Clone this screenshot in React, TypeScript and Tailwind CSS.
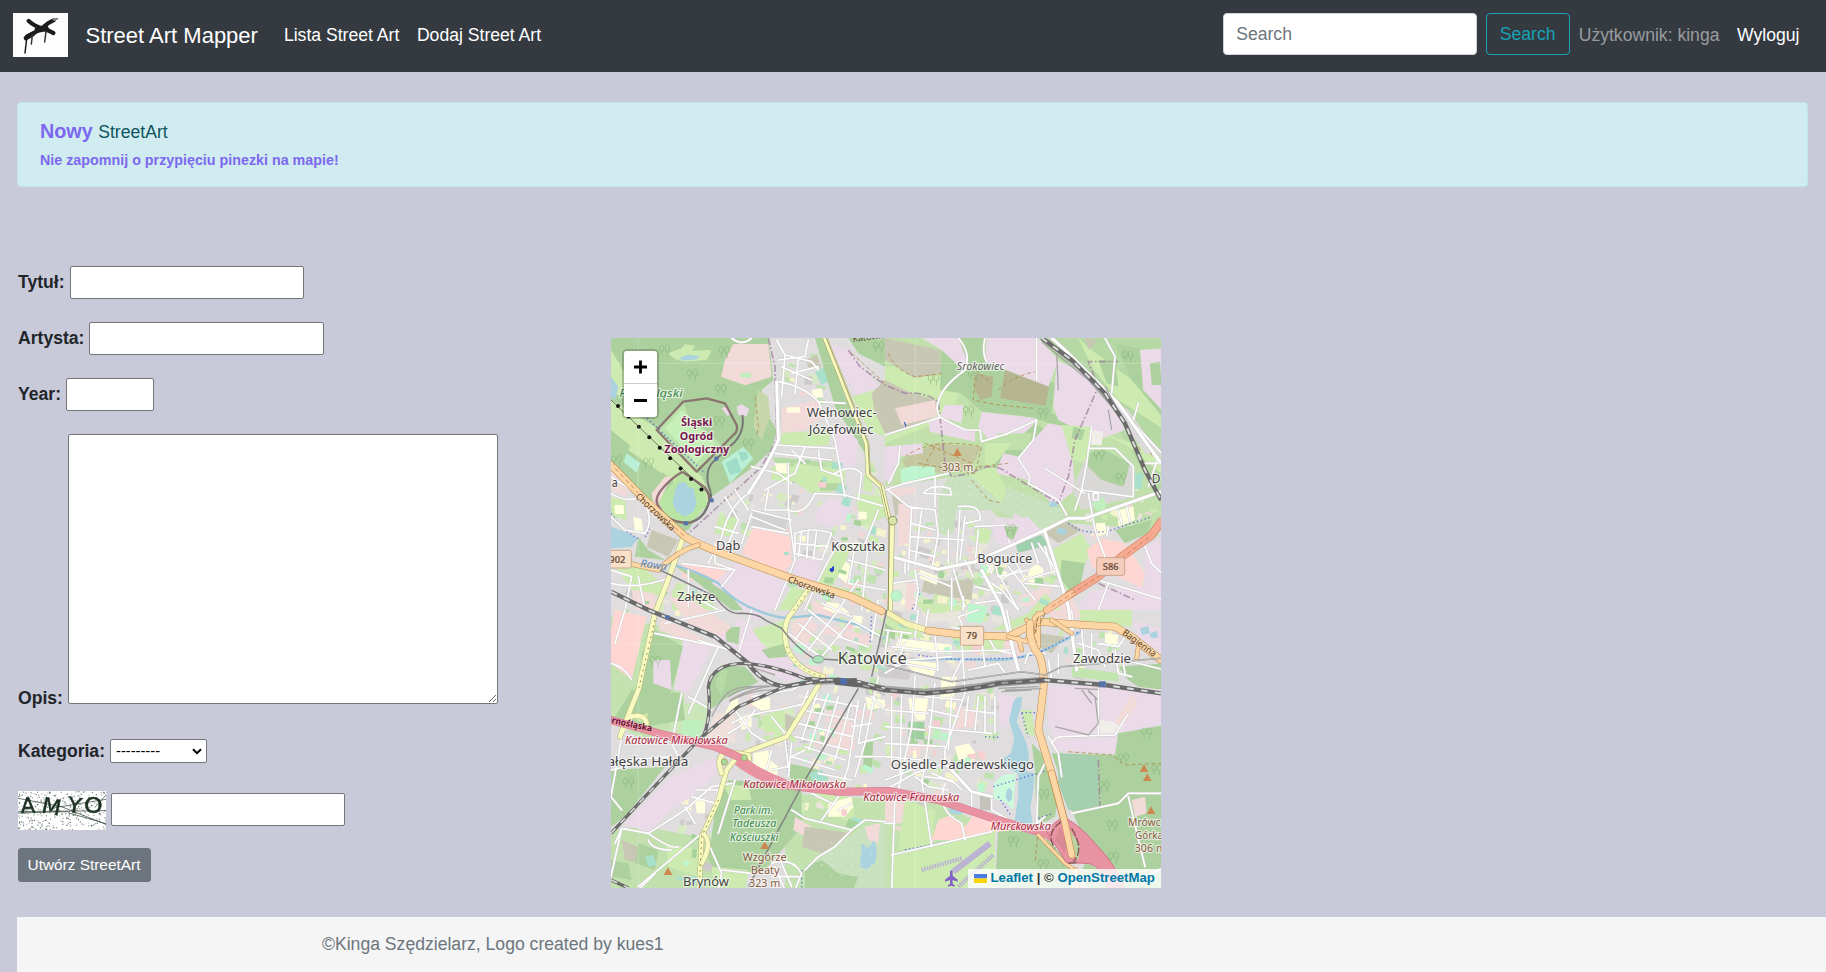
import React from "react";

type Area = [string, string];
type Label = { t: string; x: number; y: number; w: number; s: number; c: string; b?: boolean; i?: boolean; r?: number };

const FOREST = "#add19e";
const GRASS = "#cdebb0";
const PARK = "#c0efbf";
const IND = "#ebdbe8";
const RETAIL = "#ffd6d1";
const COMM = "#f2dad9";
const WATER = "#aad3df";
const BROWN = "#b6b592";
const DUMP = "#c7c7b4";
const SCHOOL = "#ffffe0";
const PITCH = "#a9e0cb";
const SCRUB = "#c8d7ab";

/* Large green backdrops, laid under everything else. */
const backdrop: Area[] = [
  ["#c2e0ac", "840,24 1668,24 1668,600 1400,580 1180,560 1050,440 840,470"],
  ["#b5d8a4", "1300,24 1668,24 1668,520 1560,330 1480,200"],
  ["#c3e2b0", "18,860 230,900 240,1180 120,1230 18,1180"],
  ["#c3e2b0", "540,1390 1000,1420 1130,1480 1180,1674 540,1674"],
  ["#c2dfae", "18,1500 120,1490 330,1530 330,1674 18,1674"],
  ["#cbe6b9", "200,1120 320,1120 280,1240 190,1230"],
  ["#b9dba8", "500,380 700,400 690,440 540,440"],
];

/* Each quadrant of the map is drawn in its own 840-unit square. */
const areasTL: Area[] = [
  [FOREST, "18,24 490,24 505,150 470,180 480,240 515,300 500,360 440,415 320,500 250,600 215,610 18,400"],
  [GRASS, "18,60 60,130 120,170 60,200 18,190"],
  [WATER, "18,140 40,170 30,210 18,200"],
  [GRASS, "190,70 230,55 240,42 270,48 262,62 320,60 305,90 240,95 210,88"],
  [WATER, "222,85 248,74 285,78 275,88 235,92"],
  [GRASS, "18,210 150,290 290,440 320,500 300,540 190,440 18,300"],
  [GRASS, "90,320 160,330 210,400 170,430 70,360"],
  [COMM, "385,42 490,42 500,140 420,166 348,140 360,90"],
  [PARK, "405,130 437,128 438,143 408,143"],
  ["#bce3ab", "155,300 235,215 305,205 360,220 395,290 390,310 275,425"],
  [FOREST, "235,215 305,205 360,220 395,290 390,310 350,345 300,300 250,260"],
  ["#c6f0b8", "180,295 230,240 330,340 275,400"],
  ["#b9f0d5", "350,395 415,350 445,385 375,460"],
  ["#9fdcc8", "362,400 395,382 410,425 375,435"],
  ["#9fdcc8", "400,365 425,365 430,385 410,395"],
  ["#b9f0d5", "65,370 105,400 95,428 55,395"],
  [SCRUB, "460,180 490,200 495,260 470,330 445,290"],
  ["#b9e4a4", "165,500 230,430 300,480 305,530 260,575 195,575 155,530"],
  [WATER, "210,480 222,458 242,456 248,470 265,475 275,520 265,545 240,560 215,545 203,520"],
  [COMM, "140,490 180,440 200,440 160,520 175,545 150,550"],
  [IND, "395,230 410,222 432,238 425,258 400,255"],
  [IND, "350,235 362,230 380,250 368,258"],
  [COMM, "18,420 80,480 60,500 18,480"],
  [SCHOOL, "85,560 110,568 115,610 90,610"],
  [GRASS, "18,500 60,510 65,570 18,560"],
  [SCHOOL, "28,525 55,525 58,552 30,552"],
  [WATER, "18,590 60,605 100,625 80,650 18,655"],
  [DUMP, "140,600 220,630 190,680 125,650"],
  [FOREST, "100,620 130,660 180,690 90,680"],
  [GRASS, "500,410 580,410 560,460 500,450"],
  [COMM, "530,235 640,210 650,260 600,300 530,310"],
  [SCHOOL, "545,232 585,232 585,248 545,248"],
  [GRASS, "520,310 680,300 670,345 530,350"],
  [PITCH, "630,125 665,108 690,145 650,165"],
  [DUMP, "600,90 635,75 650,110 615,120"],
  [SCHOOL, "620,180 650,175 655,200 625,205"],
  [FOREST, "630,24 660,24 720,200 790,340 780,370 690,230"],
  [IND, "670,40 730,60 840,190 780,240 720,140"],
  [GRASS, "740,200 840,170 840,320 790,300"],
  [DUMP, "800,190 840,150 840,310 810,250"],
  [IND, "690,290 760,330 750,410 710,420 690,350"],
  [FOREST, "730,24 840,24 840,110 760,70"],
  [GRASS, "570,400 720,420 720,480 620,490 560,450"],
  ["#b5d6a2", "645,460 712,460 712,482 645,482"],
  [IND, "640,530 680,500 735,520 730,570 680,595 630,570"],
  [GRASS, "340,560 400,560 380,620 330,610"],
  ["#d3d2d2", "445,540 550,560 540,605 440,590"],
  [RETAIL, "445,590 555,620 560,700 530,735 410,670"],
  [RETAIL, "230,700 375,710 320,770 230,740"],
  [IND, "395,690 550,760 510,840 400,840 345,760"],
  [FOREST, "200,700 240,720 330,750 420,840 380,840 280,760"],
  [DUMP, "450,775 510,785 505,812 448,800"],
  [SCHOOL, "705,680 740,710 725,760 700,740"],
  [IND, "560,690 650,680 630,760 570,750"],
  [GRASS, "690,660 740,640 720,700 680,770 640,760"],
  [GRASS, "560,770 600,780 560,840 520,840"],
  [GRASS, "750,490 840,500 840,560 770,590"],
  [SCHOOL, "510,400 545,400 545,430 515,430"],
  [SCHOOL, "760,545 785,545 785,568 760,568"],
  [GRASS, "18,690 100,700 170,760 170,800 80,780"],
  [COMM, "80,780 150,790 150,840 90,840"],
  [GRASS, "200,780 300,790 340,840 200,840"],
];

const areasTR: Area[] = [
  [GRASS, "0,110 240,120 200,260 0,340"],
  [DUMP, "0,24 165,60 170,130 90,145 0,90"],
  [DUMP, "0,150 80,190 155,210 150,260 60,300 0,310"],
  [FOREST, "170,24 300,24 300,90 510,160 500,250 620,290 560,300 430,260 290,245 230,190 165,180"],
  [IND, "110,24 220,24 245,90 235,120 170,60"],
  [IND, "305,24 460,24 520,90 490,170 300,95"],
  [BROWN, "272,130 325,140 320,200 285,210 268,175"],
  [BROWN, "360,120 492,170 482,228 345,205"],
  [COMM, "30,235 150,210 155,260 50,285"],
  [IND, "180,225 235,225 230,280 165,260"],
  [IND, "130,270 165,265 270,305 270,335 135,305"],
  [IND, "290,245 455,265 430,310 310,330 280,290"],
  [FOREST, "450,280 480,300 440,390 400,390 330,430 310,410"],
  ["#c4c79f", "50,390 150,340 290,350 260,410 170,430 60,410"],
  ["#bfe0ab", "340,310 440,310 430,360 310,360"],
  [IND, "515,90 600,130 700,260 720,300 640,330 520,270 505,230"],
  [IND, "490,280 545,290 560,350 570,480 510,530 430,450 330,430 355,370 400,380"],
  [GRASS, "530,285 620,290 600,400 560,390"],
  [FOREST, "565,290 600,300 590,330 560,325"],
  [GRASS, "250,430 330,410 370,490 340,540 270,480"],
  [GRASS, "300,340 380,340 340,390 300,430"],
  ["#c9e1bf", "190,440 260,440 350,520 365,470 520,530 545,560 480,600 420,590 340,540 215,540 205,610 160,610 160,500"],
  ["#bdf5cf", "45,420 80,408 150,410 150,445 50,460"],
  [COMM, "0,480 90,470 90,490 40,500"],
  [DUMP, "20,490 65,530 30,560"],
  [IND, "320,580 430,560 470,605 370,660 330,630"],
  [IND, "385,550 450,580 420,600 390,590"],
  [FOREST, "360,590 400,590 385,630 365,620"],
  [GRASS, "270,590 320,600 310,640 270,640"],
  ["#9fd0b0", "390,640 470,615 490,645 400,668"],
  ["#f0eee8", "620,300 655,305 650,345 615,345"],
  ["#d9d8d6", "600,390 740,400 750,500 590,540 560,480"],
  [GRASS, "650,310 840,370 840,440 730,350"],
  [FOREST, "605,370 660,360 735,400 715,470 650,450 610,410"],
  [IND, "0,350 110,340 115,370 40,380 20,460 0,450"],
  [GRASS, "580,24 620,60 740,150 840,260 840,300 700,210 620,110"],
  ["#dcdada", "650,190 730,240 830,380 780,370 700,260"],
  [FOREST, "640,90 690,90 700,170 665,160"],
  [FOREST, "690,40 780,60 770,180 840,240 840,270 740,150"],
  [DUMP, "600,24 640,30 610,60"],
  [IND, "765,60 840,55 840,250 775,180"],
  [FOREST, "795,100 825,95 830,165 800,165"],
  [PARK, "620,520 655,500 665,530 640,545"],
  [WATER, "490,515 512,515 520,530 495,530"],
  [DUMP, "480,610 540,570 590,600 520,640"],
  [WATER, "520,592 545,598 540,615 515,610"],
  [GRASS, "500,660 590,610 620,660 580,740 550,790 520,740"],
  [FOREST, "530,690 600,700 585,770 560,790 525,745"],
  [RETAIL, "605,660 650,625 720,640 780,730 770,775 700,740 620,710"],
  [IND, "780,650 840,620 840,840 570,840 620,780 780,770"],
  [SCHOOL, "632,580 660,578 665,610 640,620"],
  [SCHOOL, "700,540 745,530 750,570 700,590"],
  [SCHOOL, "430,720 455,702 475,715 475,755 430,765"],
  [SCHOOL, "340,720 365,725 370,740 350,750"],
  [SCHOOL, "300,705 325,705 325,728 305,728"],
  [FOREST, "690,600 800,570 790,610 720,640"],
  [PITCH, "750,430 775,430 770,475 750,480"],
  [DUMP, "120,740 180,752 265,750 260,810 190,800 110,785"],
  [SCHOOL, "105,720 160,740 155,765 105,745"],
  [COMM, "40,520 90,530 70,640 40,650"],
  ["#ebe7df", "20,760 100,760 90,840 20,840"],
  [COMM, "65,760 98,760 85,840 60,840"],
  [COMM, "400,800 510,760 480,820 420,830"],
];

const areasBL: Area[] = [
  [RETAIL, "30,0 125,20 80,210 18,160 18,60"],
  [FOREST, "150,60 235,110 200,240 160,320 110,310 110,130"],
  [IND, "145,150 195,150 200,240 145,220"],
  [IND, "240,80 320,110 300,160 250,250 205,240"],
  [COMM, "170,20 300,90 290,110 160,60"],
  [IND, "300,70 440,50 600,190 560,220 420,160 380,130"],
  [FOREST, "360,50 410,55 400,100 365,95"],
  [GRASS, "440,60 540,30 540,110 470,120"],
  [FOREST, "315,300 310,200 350,165 420,170 460,215 370,260"],
  ["#b7dba6", "330,220 350,180 370,180 350,260"],
  [FOREST, "18,340 80,240 230,250 240,330 120,350"],
  [GRASS, "70,320 130,310 120,340"],
  ["#f0e0dc", "330,310 390,310 390,400 300,390"],
  [SCHOOL, "400,320 440,310 440,350 410,360"],
  [SCHOOL, "380,270 400,265 400,300 360,310"],
  [SCHOOL, "430,275 495,262 495,298 470,302"],
  [DUMP, "540,310 580,330 560,370 540,360"],
  [GRASS, "470,320 540,290 540,360 480,370"],
  ["#b9f0d5", "652,255 675,250 682,275 660,288"],
  [FOREST, "18,480 180,470 60,620 18,650"],
  [IND, "60,640 200,500 330,440 335,490 300,530 200,600 130,670"],
  [SCHOOL, "445,430 490,420 495,450 520,470 515,505 480,510 445,480"],
  [FOREST, "370,510 590,525 590,650 480,780 350,800 310,750 330,600"],
  [GRASS, "350,520 430,530 440,570 380,570"],
  [FOREST, "550,460 640,480 630,540 560,530"],
  [PITCH, "610,490 650,480 670,510 625,515"],
  [COMM, "570,620 620,650 600,680 565,660"],
  [DUMP, "600,650 740,670 650,730 590,710"],
  [GRASS, "620,540 700,530 750,590 740,640 670,610"],
  [SCHOOL, "670,580 740,560 745,590 720,620 670,620"],
  [COMM, "650,350 750,330 750,420 660,410"],
  [FOREST, "775,395 805,395 800,485 775,480"],
  [COMM, "665,300 720,300 710,340 660,335"],
  [SCHOOL, "780,260 840,270 840,290 790,300"],
  ["#c9e1bf", "640,740 760,660 840,640 840,850 600,850"],
  [FOREST, "600,770 650,750 700,790 760,800 740,850 600,850"],
  [COMM, "780,650 825,640 820,700 790,690"],
  [WATER, "770,700 788,715 808,690 816,720 810,760 785,778 765,770"],
  [DUMP, "50,690 120,720 110,760 60,750"],
  [FOREST, "100,700 160,720 150,780 90,760"],
  [PITCH, "120,740 145,735 155,765 130,770"],
  [WATER, "230,715 245,708 265,722 262,742 240,755 228,740"],
  [GRASS, "180,700 290,720 275,800 190,770"],
  [FOREST, "18,750 70,760 80,810 18,800"],
  [GRASS, "320,770 430,780 420,850 330,850"],
  [FOREST, "520,620 560,610 540,690 510,700"],
  [SCHOOL, "270,570 300,565 300,610 275,610"],
  [PARK, "235,330 300,330 280,390 230,370"],
];

const areasBR: Area[] = [
  [COMM, "490,0 570,0 560,40 500,30"],
  [DUMP, "460,70 540,80 500,130 460,110"],
  [COMM, "350,90 410,95 410,150 370,150"],
  [SCHOOL, "660,70 700,75 695,105 660,100"],
  [GRASS, "570,0 740,0 740,50 590,40"],
  [IND, "740,30 840,60 840,150 760,80"],
  [WATER, "765,55 790,48 795,70 770,75"],
  [WATER, "795,70 815,62 820,82 798,85"],
  [FOREST, "700,170 840,160 840,240 760,230 730,210"],
  ["#c2e4af", "560,170 700,190 700,215 560,200"],
  [IND, "490,225 640,230 640,380 510,390 490,340"],
  [IND, "640,230 840,240 840,340 720,370 640,380"],
  [IND, "510,390 700,380 690,430 505,420"],
  ["#f0eee8", "640,330 720,340 700,370 640,370"],
  [COMM, "740,250 760,280 710,350 690,340"],
  [FOREST, "500,430 690,435 700,370 840,345 840,840 690,840 620,740 560,600"],
  ["#a6cfb0", "520,430 640,440 640,600 550,600 520,520"],
  [IND, "340,250 395,260 365,350 345,350"],
  [GRASS, "410,300 440,300 450,380 420,370"],
  [WATER, "385,275 395,262 412,262 408,290 395,335 425,400 432,440 425,485 448,490 445,540 436,590 450,700 430,720 415,755 400,740 405,700 380,685 400,560 400,490 360,470 355,445 378,430 388,385 372,330"],
  ["#cdfadd", "325,520 355,495 392,490 385,600 360,575 325,565"],
  [WATER, "365,540 374,533 382,545 380,570 370,576 362,562"],
  [FOREST, "440,400 480,440 520,560 510,620 455,650 450,480"],
  [FOREST, "340,640 490,690 560,770 560,840 330,840"],
  ["#9fcf9f", "70,335 118,335 118,390 70,385"],
  [PARK, "145,345 170,350 165,390 140,385"],
  [SCHOOL, "170,200 215,200 205,270 165,270"],
  [SCHOOL, "70,265 130,265 120,330 100,330 75,300"],
  [COMM, "70,395 115,400 105,440 65,440"],
  [COMM, "210,290 280,300 270,350 210,360"],
  [SCHOOL, "210,410 250,400 280,440 250,460 220,450"],
  [COMM, "0,560 80,570 60,640 0,640"],
  [GRASS, "60,570 150,600 140,700 40,720"],
  [WATER, "190,590 240,600 225,615 195,610"],
  [RETAIL, "160,630 200,615 240,650 270,610 310,620 390,655 230,690 140,690"],
  [GRASS, "20,740 330,660 330,840 20,840"],
  ["#c4c2ba", "285,550 320,560 315,600 285,600"],
  [COMM, "740,570 780,560 785,610 750,620"],
];

/* City centre and the belt south of the trunk road, in whole-map units. */
const centre: Area[] = [
  [IND, "320,760 405,700 550,760 520,820 480,850 450,880 380,800"],
  [IND, "395,860 430,880 470,940 600,1040 540,1045 430,990 390,950"],
  [FOREST, "365,895 405,890 400,945 365,930"],
  [FOREST, "470,960 540,940 545,980 490,985"],
  [COMM, "190,800 260,810 380,890 350,920 250,880"],
  [COMM, "560,880 600,850 640,890 600,950 560,940"],
  [COMM, "620,810 700,840 660,870 620,840"],
  [SCHOOL, "665,815 700,820 735,850 690,850 655,835"],
  [SCHOOL, "745,855 775,860 765,895 740,885"],
  [GRASS, "640,760 740,780 800,810 790,825 650,770"],
  [COMM, "655,880 800,920 790,950 720,930 650,910"],
  [GRASS, "845,860 940,900 960,925 880,920 840,900"],
  [SCHOOL, "880,925 1040,945 1040,972 870,960"],
  [GRASS, "1040,920 1200,930 1190,970 1060,965"],
  [SCHOOL, "850,985 1000,1000 985,1040 930,1030 900,1000"],
  ["#e9e5dd", "940,820 1070,820 1065,880 960,870"],
  [GRASS, "930,815 1065,825 1070,840 1000,850 960,850"],
  ["#bdf5cf", "1090,820 1150,830 1130,880 1085,875"],
  [FOREST, "840,880 870,900 870,930 838,915"],
  ["#cfcccc", "820,1010 920,1020 910,1050 820,1040"],
  [COMM, "600,1000 650,1010 650,1030 610,1030"],
  [GRASS, "1160,900 1200,880 1270,850 1320,790 1340,810 1310,850 1220,900"],
  [COMM, "1360,830 1400,800 1430,860 1390,870"],
];

/* Minor streets, white with a faint casing. */
const streetsTL = [
  "M380 24Q410 50 440 24M515 30L540 75L620 95L640 120M520 90L600 80L610 30M530 110L620 150M540 75L530 200M580 85L570 190M560 130L640 110",
  "M520 155Q600 170 640 215L690 330L720 500M520 160L525 330Q480 430 430 490Q370 530 350 620L310 700M510 345L690 355M640 215L720 220",
  "M690 430Q740 400 770 430L760 510M550 540Q600 560 630 490L720 495L840 530M550 400L550 540L570 690L510 840M600 350L570 430L480 480",
  "M360 500L400 570M390 480L430 540M400 570L370 640M330 590L400 610M440 540L560 570M440 560L540 600M410 640L440 550M440 590L550 610",
  "M570 610Q620 590 680 610L650 690L570 670ZM590 605L580 680M610 600L605 685M635 600L625 690M570 640L670 650",
  "M600 840Q640 740 700 640L770 640M730 690L840 720M750 650L730 760L840 780M790 640L770 840M820 540L780 640L840 660",
  "M18 490Q60 520 110 500Q150 570 120 610L60 600L18 560M70 470L150 560M18 720L80 740L60 840M18 760Q100 780 200 740M100 740L120 840",
  "M230 700L380 720M330 640L330 700L390 720L350 770M250 720L250 830M250 790L340 840M18 440L110 500",
  "M440 410L520 430L560 460M490 480L480 540L550 540M510 370L680 390M560 360L600 400M640 360L650 420L710 440M690 240L660 260",
];
const streetsTR = [
  "M220 24Q260 70 240 120Q170 170 160 215Q150 240 165 262L0 315M300 24Q290 70 305 95M455 24L455 150M165 262L240 300L285 300L290 335L370 310L455 270L445 330L400 385L435 440L430 460L520 510L545 555",
  "M0 480L60 460L190 430M10 480L70 530L150 540L160 610L140 720M80 530L70 720M110 540L90 700M80 580L150 600M75 620L240 630M70 660L150 680",
  "M45 350L40 400L10 460M115 490Q140 460 195 475L200 495L120 490M150 440L150 530M220 530Q290 520 285 570L240 580M225 540L215 700M240 560L225 690M190 600L190 700M280 600L270 700M270 590L370 585",
  "M620 290L605 400L590 480L570 540M610 355L690 355L745 410L745 500M480 415L600 490M590 480L740 500M625 490L625 510L640 510L640 490ZM610 490L630 600L660 680M680 210L840 380M760 220L745 270M660 24L690 80L680 190",
  "M370 630L380 650M240 690L265 740M290 740L350 780L400 840M270 770L350 790M270 820L340 810M330 700L340 740L430 720M390 690L420 750L520 720M370 710L450 810M345 740L400 840M420 760L530 770M460 640L500 700L530 760",
  "M20 730L20 840M60 690L60 730M90 720L100 780L90 840M200 700L240 830M20 760L90 750M235 800L235 840M640 750L840 810M670 760L640 840M700 540L710 580M725 530L735 575M670 590L665 620",
  "M780 650L800 700L840 740M840 400L780 400M820 380L790 470M300 680L320 730M360 740L400 720M440 640L460 700M480 650L500 720M100 730L200 770M200 745L200 840",
];
const streetsBL = [
  "M60 0L30 100M18 160Q60 170 80 210M150 70L340 110L250 310M340 110L380 120M250 260L320 300M180 40L360 0M280 90L400 130L440 0",
  "M230 250L200 400L220 440M390 300L440 370L490 400M380 340Q430 310 520 300L600 280M370 370L420 340L450 300M500 320L540 370M440 260L560 240L600 220",
  "M600 260L760 290M590 300L750 330M580 340L740 380M570 380L730 420M600 410L720 450M560 440L690 480M640 240L590 390M670 250L610 420M700 260L650 430M560 400L550 500M540 390L550 470L500 480M500 420L480 500",
  "M760 270L730 470L700 560L650 630M560 600L600 625L740 660L780 630L840 635M740 660L690 710L640 740L600 780M560 440L600 420M700 600L740 580M640 490L740 510M620 550L680 580",
  "M50 600L18 560L50 380L80 330M30 700L50 655L130 670Q200 720 220 710M50 655L18 800M130 670L240 600L320 530L380 520M240 590L270 640M260 560L330 580M270 540L340 540L320 620M390 510L340 670M100 830L290 670M130 690Q140 720 200 720",
  "M550 70L660 150M580 40L680 120M610 0L710 80M650 -20L740 20M570 90L620 20M610 120L700 0L760 -90M650 140L740 30M700 80L790 110M740 30L830 80M820 -30L800 90",
  "M500 760Q560 740 590 790L570 840M510 770L540 840M530 760L560 830M500 800L580 800M310 700L350 790L340 840M150 790L100 840M350 780L440 790",
  "M820 200L780 400L750 500M800 340L740 350M840 380L760 400M840 440L750 440M800 260L840 300M60 450L200 440M18 480L60 470M610 240L560 370M740 270L690 450M780 280L760 400",
];
const streetsBR = [
  "M200 50Q250 70 220 20L280 0M365 0L400 180M230 80L240 250L180 420L180 460M90 200L80 350L40 540M150 220L130 400L110 520M0 300L130 310M0 350L120 360M0 400L180 410M20 260L20 480M50 250L45 490M0 440L110 450",
  "M120 260L230 270M200 260L190 420M130 300L220 320M130 350L205 360L320 370M280 260L270 360M250 260L240 350M330 260L330 370M300 260L300 370M240 300L330 310",
  "M560 0L575 180M490 150L500 210M520 130L520 190M590 60L600 170M620 70L620 160M690 120L700 190L740 200M710 130L720 190M640 100L700 110L720 80M580 100L640 120L660 170M720 150L840 180",
  "M640 235L640 375M500 400Q510 380 530 380L690 375L730 310M480 620L455 640L460 500L490 440L460 400L455 380M530 500L520 430L490 380",
  "M0 540L90 490L180 460L250 540L320 560L320 600L390 640M260 545L260 600L310 610M90 500L130 530L190 540M180 520Q150 600 230 640L240 690M110 510L140 710M0 510L80 480M120 500L200 510L230 540M140 490L210 520",
  "M30 560L20 840M20 735L320 665M0 640L30 640M560 610L700 580L730 550L840 550M730 560L780 770M780 800L840 770M0 190L70 150L200 140M230 150L200 210M60 100L30 170M100 0L90 80M0 60L80 70",
  "M250 180L340 160L360 190M420 160L430 130L480 130M130 0L120 60M310 80L330 120L380 130M10 60L0 130M50 70L40 120M20 110L160 125L380 120M150 80L160 180M290 90L300 170M0 150L160 180",
];

const labels: Label[] = [
  { t: "Park Śląski", x: 43, y: 200, w: 190, s: 34, c: "#3c8a4b", i: true },
  { t: "Śląski", x: 228, y: 289, w: 94, s: 32, c: "#7a1750", b: true },
  { t: "Ogród", x: 224, y: 329, w: 100, s: 32, c: "#7a1750", b: true },
  { t: "Zoologiczny", x: 178, y: 368, w: 195, s: 32, c: "#7a1750", b: true },
  { t: "Wełnowiec-", x: 605, y: 262, w: 210, s: 39, c: "#444" },
  { t: "Józefowiec", x: 611, y: 313, w: 195, s: 39, c: "#444" },
  { t: "Dąb", x: 333, y: 661, w: 73, s: 39, c: "#444" },
  { t: "Koszutka", x: 679, y: 664, w: 162, s: 39, c: "#444" },
  { t: "Załęże", x: 216, y: 813, w: 115, s: 39, c: "#444" },
  { t: "a", x: 20, y: 472, w: 18, s: 38, c: "#444" },
  { t: "Chorzowska", x: 90, y: 502, w: 150, s: 28, c: "#5a3b20", r: 43 },
  { t: "Chorzowska", x: 547, y: 756, w: 148, s: 28, c: "#5a3b20", r: 20 },
  { t: "Rawa", x: 105, y: 710, w: 80, s: 32, c: "#5b86b5", i: true, r: 8 },
  { t: "Katowicka", x: 744, y: 37, w: 125, s: 28, c: "#5a4b30", r: -8 },
  { t: "Srokowiec", x: 1055, y: 119, w: 143, s: 30, c: "#666", i: true },
  { t: "303 m", x: 1010, y: 424, w: 95, s: 31, c: "#8a5b40" },
  { t: "Bogucice", x: 1117, y: 699, w: 165, s: 38, c: "#444" },
  { t: "D", x: 1640, y: 459, w: 26, s: 38, c: "#444" },
  { t: "Katowice", x: 698, y: 1003, w: 207, s: 47, c: "#444" },
  { t: "Zawodzie", x: 1404, y: 1000, w: 174, s: 38, c: "#444" },
  { t: "Bagienna", x: 1550, y: 912, w: 118, s: 28, c: "#5a3b20", r: 36 },
  { t: "Górnośląska", x: -15, y: 1172, w: 158, s: 27, c: "#6b1636", b: true, r: 12 },
  { t: "Katowice Mikołowska", x: 60, y: 1242, w: 308, s: 32, c: "#ad2841", i: true },
  { t: "Katowice Mikołowska", x: 415, y: 1375, w: 308, s: 32, c: "#ad2841", i: true },
  { t: "Katowice Francuska", x: 775, y: 1412, w: 288, s: 32, c: "#ad2841", i: true },
  { t: "Murckowska", x: 1157, y: 1501, w: 181, s: 32, c: "#ad2841", i: true },
  { t: "Załęska Hałda", x: -16, y: 1307, w: 266, s: 38, c: "#444" },
  { t: "Osiedle Paderewskiego", x: 857, y: 1317, w: 430, s: 38, c: "#444" },
  { t: "Park im.", x: 386, y: 1452, w: 118, s: 31, c: "#3c8a4b", i: true },
  { t: "Tadeusza", x: 382, y: 1491, w: 132, s: 31, c: "#3c8a4b", i: true },
  { t: "Kościuszki", x: 374, y: 1532, w: 146, s: 31, c: "#3c8a4b", i: true },
  { t: "Wzgórze", x: 413, y: 1594, w: 132, s: 31, c: "#8a5b40" },
  { t: "Beaty", x: 437, y: 1633, w: 87, s: 31, c: "#8a5b40" },
  { t: "323 m", x: 432, y: 1672, w: 94, s: 31, c: "#8a5b40" },
  { t: "Brynów", x: 234, y: 1669, w: 138, s: 38, c: "#444" },
  { t: "Mrówcza", x: 1569, y: 1487, w: 130, s: 31, c: "#8a5b40" },
  { t: "Górka", x: 1590, y: 1526, w: 84, s: 31, c: "#8a5b40" },
  { t: "306 m", x: 1589, y: 1565, w: 94, s: 31, c: "#8a5b40" },
];

const trees = [
  [262, 135], [347, 180], [342, 275], [430, 343], [357, 67], [178, 62], [130, 400], [34, 393],
  [985, 150], [1105, 135], [1090, 245], [1314, 250], [1482, 376], [1548, 445], [1568, 80], [820, 52], [1215, 600],
  [1497, 1370], [1555, 1287], [1316, 1395], [1522, 1488], [1525, 1583], [1315, 1605], [1225, 1535], [150, 995], [70, 1360], [1655, 1320], [1625, 1210],
];

const peaks = [[1057, 370], [1617, 1318], [1627, 1345], [1638, 1444], [479, 1549], [189, 1627]];

function Areas({ list }: { list: Area[] }) {
  return <>{list.map(([fill, points], i) => <polygon key={i} fill={fill} points={points} />)}</>;
}

function Streets({ list, main }: { list: string[]; main?: boolean }) {
  return (
    <g fill="none" strokeLinejoin="round" strokeLinecap="round">
      {list.map((d, i) => <path key={"c" + i} d={d} stroke="#cbc8c8" strokeWidth={main ? 12 : 7.5} />)}
      {list.map((d, i) => <path key={"f" + i} d={d} stroke="#fff" strokeWidth={main ? 9 : 5} />)}
    </g>
  );
}

function Road({ d, w, fill, edge }: { d: string; w: number; fill: string; edge: string }) {
  return (
    <g fill="none" strokeLinejoin="round" strokeLinecap="round">
      <path d={d} stroke={edge} strokeWidth={w + 3} />
      <path d={d} stroke={fill} strokeWidth={w} />
    </g>
  );
}

function Rail({ d, w = 10 }: { d: string; w?: number }) {
  return (
    <g fill="none">
      <path d={d} stroke="#6b6b6b" strokeWidth={w} />
      <path d={d} stroke="#dedede" strokeWidth={w * 0.45} strokeDasharray="20 22" />
    </g>
  );
}

/* Small building blocks and gardens scattered inside the built-up parts. */
function blocks(zones: number[][], density: number, colors: string[], start: number) {
  const out: React.ReactElement[] = [];
  let seed = start;
  const rnd = () => (seed = (seed * 16807) % 2147483647) / 2147483647;
  zones.forEach(([x, y, w, h], z) => {
    const n = Math.round((w * h) / density);
    for (let i = 0; i < n; i++) {
      const px = x + rnd() * w;
      const py = y + rnd() * h;
      const bw = 8 + rnd() * 24;
      const bh = 7 + rnd() * 20;
      out.push(<rect key={z + "-" + i} x={px} y={py} width={bw} height={bh} fill={colors[Math.floor(rnd() * colors.length)]} transform={`rotate(${Math.round(rnd() * 34 - 7)} ${px} ${py})`} />);
    }
  });
  return out;
}

const builtUp = [[520, 380, 300, 450], [700, 560, 440, 440], [860, 560, 280, 260], [1080, 700, 270, 230], [560, 860, 280, 560], [840, 1060, 330, 320], [60, 750, 330, 90], [400, 1080, 180, 170], [1340, 900, 220, 130], [220, 1400, 140, 230], [340, 480, 180, 140], [530, 60, 110, 170], [860, 1400, 160, 180], [1440, 440, 220, 170]];
const blockColors = ["#d6ecc0", "#f5f4cf", "#f0d8d6", "#cdcaca", "#cdebb0", "#bfe3b0", "#e9e5dd"];
const accents = [[530, 390, 280, 430], [850, 700, 300, 300], [560, 860, 270, 200], [580, 1100, 240, 280], [840, 1080, 300, 300], [60, 770, 300, 60], [180, 1460, 140, 180], [640, 1400, 180, 90], [1360, 920, 190, 90], [1120, 700, 190, 180]];
const accentColors = ["#fdfdd0", "#bdf5cf", "#a9e0cb", "#f6cfd0", "#a6d39b"];

function CityMap() {
  return (
    <svg className="block size-full" viewBox="18 24 1650 1650" fontFamily='"Noto Sans", sans-serif'>
      <rect x="18" y="24" width="1650" height="1650" fill="#dfdddd" />
      <Areas list={backdrop} />
      <g>{blocks(builtUp, 1500, blockColors, 17)}</g>
      <Areas list={areasTL} />
      <g transform="translate(840 0)"><Areas list={areasTR} /></g>
      <g transform="translate(0 840)"><Areas list={areasBL} /></g>
      <g transform="translate(840 840)"><Areas list={areasBR} /></g>
      <Areas list={centre} />
      <g transform="scale(1)">
        {blocks(accents, 5200, accentColors, 2203)}
      </g>

      <g fill="none" stroke="#9cc8dc" strokeWidth="7">
        <path d="M190 700Q270 720 340 760Q370 800 430 830Q520 870 560 862L640 855L760 885L840 925M900 990Q1010 985 1160 990Q1260 990 1340 950L1430 905" />
      </g>
      <g fill="none" stroke="#4a5ad8" strokeWidth="4" strokeDasharray="4 8" opacity=".85">
        <path d="M100 240L300 430M18 550Q60 610 100 625M130 560Q140 600 120 620M940 975Q1060 995 1160 985Q1260 990 1330 955L1430 900M1250 1150L1270 1220M1250 1148L1290 1148M1165 1370L1330 1320M1180 1400L1220 1460M1390 580Q1440 620 1520 600L1640 560M1300 1465L1345 1450M590 1620L590 1674M900 1560L1150 1510M545 1240L550 1330M1140 1220L1180 1222M930 720L945 790L920 840M800 860L795 940" />
      </g>
      <path d="M680 716q-7-3-4 7q6 6 10-2l-1-12zM898 276l5 14" fill="#2644c8" stroke="#2644c8" strokeWidth="3" />
      <g fill="none" stroke="#b07b3c" strokeWidth="3" strokeDasharray="12 8" opacity=".7">
        <path d="M850 70Q870 120 930 140L1020 130M1110 120L1160 160M1110 140L1105 210L1180 225L1290 235M1180 180Q1220 140 1290 125M900 380Q980 320 1130 350L1110 430L940 400M960 340L1100 400M990 350L950 420M1100 450L1150 510L1190 520M1120 410L1210 400M1390 1265L1520 1275L1560 1305L1668 1300M1300 1500L1290 1600M450 200L460 290L455 320M740 70L840 160M1600 350L1610 370M1630 345L1640 375" />
      </g>
      <g fill="none" stroke="#9a7a9a" strokeWidth="5" strokeDasharray="22 7 5 7" opacity=".7">
        <path d="M490 24L510 110L515 330L470 410L240 620M730 60L765 110L840 165L900 190Q960 185 1000 215L1020 400L1040 440L1100 430Q1160 390 1210 430L1360 520L1390 440L1410 330L1480 170L1450 95L1540 95" />
        <path d="M1480 1290L1485 1440M1480 760L1590 810" />
      </g>

      <Streets list={streetsTL} />
      <g transform="translate(840 0)"><Streets list={streetsTR} /></g>
      <g transform="translate(0 840)"><Streets list={streetsBL} /></g>
      <g transform="translate(840 840)"><Streets list={streetsBR} /></g>
      <Streets main list={["M870 683L1000 718L1110 695L1310 605L1390 565L1440 565L1668 485", "M1318 600L1350 700L1390 830L1415 1020", "M515 155L520 330Q490 400 430 490", "M1668 400L1540 220L1380 60L1340 24", "M1020 1300L1100 1385L1160 1400", "M1130 720L1190 830L1240 1020"]} />

      {/* park and lake outlines */}
      <g fill="none" strokeLinejoin="round">
        <path d="M155 300L235 215L305 205L360 220L395 285Q400 305 385 315L275 425Z" stroke="#7c565f" strokeWidth="7" opacity=".75" />
        <path d="M232 425Q190 450 165 485Q145 515 165 535Q190 580 255 578Q300 565 312 515Q315 480 290 465L232 425" stroke="#7c565f" strokeWidth="7" opacity=".8" />
        <path d="M412 255Q420 300 390 335L325 395Q300 420 310 465Q325 500 312 515Q300 560 265 575" stroke="#777" strokeWidth="6" />
        <path d="M18 210L320 500" stroke="#444" strokeWidth="2" />
      </g>
      {Array.from({ length: 9 }, (_, i) => <circle key={i} cx={39 + i * 31.3} cy={228 + i * 31.3} r="6" fill="#111" />)}

      {/* yellow roads */}
      <Road w={12} fill="#f7fabf" edge="#a9a46c" d="M660 24L710 150L785 340L790 435L830 470L850 560L862 580L855 840" />
      <path d="M664 24L714 150L789 340L794 433L828 466L852 570L850 840" fill="none" stroke="#77733a" strokeWidth="2" />
      <circle cx="863" cy="572" r="13" fill="#d5e4a8" stroke="#98935a" strokeWidth="3" />
      <Road w={14} fill="#f7fabf" edge="#b5b07a" d="M232 630L185 760L150 850L100 1080L60 1180L45 1220M75 1160Q120 1150 125 1180" />
      <Road w={13} fill="#f7fabf" edge="#b5b07a" d="M615 770L560 850Q530 880 545 950Q570 1020 655 1040L620 1100L545 1220L400 1275L365 1320L340 1410L290 1520L283 1674" />
      <Road w={13} fill="#f7fabf" edge="#b5b07a" d="M350 1330Q330 1280 365 1265L430 1275Q440 1300 410 1310M295 1510Q325 1540 290 1600" />
      <Road w={16} fill="#f7f3b4" edge="#b5b07a" d="M850 850L900 880L980 905" />
      <path d="M620 770L560 850M545 950Q570 1020 655 1040M340 1410L290 1520L283 1674M150 870L100 1080" fill="none" stroke="#8b853f" strokeWidth="3" strokeDasharray="5 12" />

      {/* trunk roads */}
      <Road w={20} fill="#fcd6a4" edge="#bd8a4c" d="M18 405L120 510L240 620Q280 645 380 680L560 745L740 800L830 843" />
      <Road w={13} fill="#fcd6a4" edge="#bd8a4c" d="M70 700L160 720Q220 660 280 645" />
      <Road w={20} fill="#fcd6a4" edge="#bd8a4c" d="M970 902L1080 915L1210 920Q1250 900 1300 875L1440 885L1530 890L1580 920L1668 990" />
      <Road w={11} fill="#fcd6a4" edge="#bd8a4c" d="M1210 920L1265 935L1290 860L1330 840M1265 870L1300 930M1340 870L1400 910M1300 850L1300 950M1250 960L1240 925M1600 950L1595 985" />
      <path d="M1275 870L1290 905M1300 860L1285 930M1320 850L1300 890" fill="none" stroke="#9a713f" strokeWidth="3" strokeDasharray="14 6" />
      <Road w={20} fill="#fcd6a4" edge="#bd8a4c" d="M1275 880Q1270 940 1305 980Q1320 1030 1315 1080L1300 1200L1340 1330L1380 1480" />
      <Road w={22} fill="#f6a991" edge="#cc7d5c" d="M1390 796L1480 740L1550 680L1640 615L1668 575" />
      <Road w={19} fill="#fcc6a0" edge="#bd8a4c" d="M1325 840L1400 790" />
      <path d="M30 415L120 510L240 620M1340 830L1480 740L1640 615" fill="none" stroke="#b36c39" strokeWidth="2" strokeDasharray="14 9" />

      {/* motorway */}
      <Road w={21} fill="#e892a2" edge="#d5798f" d="M18 1170L180 1215L330 1250L410 1285Q460 1340 540 1365L700 1385L850 1383L1000 1410L1180 1470L1330 1515L1390 1560" />
      <path d="M400 1290Q450 1330 540 1365" fill="none" stroke="#e892a2" strokeWidth="34" />
      <Road w={9} fill="#fcd6a4" edge="#bd8a4c" d="M1300 1515L1380 1600L1440 1640L1460 1674" />
      <path d="M1325 1505Q1345 1475 1378 1462Q1430 1490 1470 1540Q1530 1600 1560 1674L1505 1674Q1490 1600 1440 1600L1385 1598Z" fill="#e892a2" stroke="#d0728a" strokeWidth="3" />
      <path d="M1440 1602Q1485 1600 1505 1674L1450 1674L1428 1625Z" fill={FOREST} />
      <polygon points="1395,1500 1425,1550 1420,1590 1400,1570" fill="#b9d3a0" />
      <polygon points="1365,1490 1385,1540 1380,1570 1350,1530" fill="#d98a92" />
      <path d="M1370 1474Q1318 1510 1350 1555M1400 1495Q1440 1560 1405 1595M1390 1600L1415 1598" fill="none" stroke="#7d5550" strokeWidth="4" strokeDasharray="25 6" />
      <Road w={18} fill="#fcd6a4" edge="#bd8a4c" d="M1340 1330L1380 1480L1400 1575" />
      <Road w={14} fill="#fcd6a4" edge="#bd8a4c" d="M1412 1620L1417 1674" />
      <circle cx="418" cy="1283" r="9" fill="#a8dc9a" stroke="#a9a46c" strokeWidth="3" />
      <circle cx="358" cy="1296" r="9" fill="#a8dc9a" stroke="#a9a46c" strokeWidth="3" />

      {/* railways */}
      <g fill="none" stroke="#a2a2a2" strokeWidth="4" opacity=".9">
        <path d="M1320 24L1470 150L1530 240M1330 30L1480 170L1540 255M1310 35L1450 150L1520 230M1315 30L1460 150L1525 235M1500 170L1550 260L1600 370M1355 70L1360 180M1510 240L1520 300" />
        <path d="M370 1100Q430 1060 520 1070M375 1110Q450 1065 550 1065M365 1090Q400 1065 470 1070M372 1115Q440 1075 520 1080M450 1015L510 1035M1180 1075L1300 1070M1190 1085L1280 1080M1200 1080L1310 1076M1430 1080L1460 1120M1410 1075L1480 1078M1450 1080L1478 1110M1350 1190L1450 1215L1480 1180L1470 1100L1450 1085M320 1160Q350 1100 375 1085" />
      </g>
      <Rail d="M18 785L130 840L330 920L430 1000Q470 1060 540 1070L620 1055L700 1050L840 1080L960 1090Q1100 1080 1180 1060L1320 1050L1500 1065L1668 1090" w={13} />
      <path d="M620 1055L700 1052L840 1077L960 1086Q1100 1076 1180 1060L1320 1050" fill="none" stroke="#5d5d5d" strokeWidth="20" opacity=".45" />
      <Rail d="M295 1220Q320 1160 310 1070Q320 1000 420 1000Q500 1005 600 1045L760 1055L840 1075" />
      <Rail d="M18 1510L120 1400L280 1230L400 1130L540 1070L660 1050" />
      <Rail d="M1310 24L1400 90L1500 190L1560 280L1620 420L1668 510" w={13} />
      <Rail d="M18 1650L70 1674" />
      <path d="M685 1046L755 1044L760 1072L690 1064z" fill="#656565" /><rect x="706" y="1045" width="20" height="18" fill="#4d6fae" />
      <g fill="#5573a8"><rect x="1482" y="1054" width="20" height="18" /><rect x="180" y="856" width="14" height="12" /><rect x="328" y="380" width="12" height="12" /><rect x="314" y="505" width="12" height="12" /><rect x="236" y="574" width="14" height="12" /></g>
      <g fill="none" stroke="#828282" strokeWidth="4.5">
        <path d="M165 720L330 800Q370 855 405 850Q460 850 480 870L530 895Q570 950 625 985M655 988L700 990M800 1040L845 840M430 1670L600 1350L760 1075M840 1005L1040 1055L1250 1025L1320 1035L1370 1010L1668 985" />
      </g>
      <path d="M840 1005L1040 1055L1250 1025L1320 1035L1370 1010L1668 985" fill="none" stroke="#fff" strokeWidth="1.5" />
      <ellipse cx="640" cy="988" rx="17" ry="11" fill="#a9e2b8" stroke="#999" strokeWidth="3" />
      <circle cx="874" cy="797" r="16" fill="#bdf5cf" stroke="#a3d8b2" strokeWidth="2" />

      <g stroke="#bbb3d3" fill="none">
        <path d="M1045 1625L1155 1540" strokeWidth="18" />
        <path d="M950 1620L1070 1585M1060 1670L1165 1575" strokeWidth="13" strokeDasharray="5 3" />
      </g>
      <path d="M1035 1624q4-6 8 0v13l15 12v6l-15-5v11l6 5v4l-10-3-10 3v-4l6-5v-11l-15 5v-6l15-12z" fill="#8461c4" />

      <g stroke="#7da972" strokeWidth="2" fill="none" opacity=".75">
        {trees.map(([x, y], i) => (
          <path key={i} d={`M${x - 8} ${y + 14}v-16m-4 5q-7-16 4-19q10 3 5 16m-5 4l4-4M${x + 9} ${y + 17}v-16m-5 2q-5-18 5-20q10 3 5 18m-5 4l5-6`} />
        ))}
      </g>
      {peaks.map(([x, y], i) => <path key={i} d={`M${x - 13} ${y + 8}l13-23l13 23z`} fill="#cf8750" />)}
      <g fill="#fff" opacity=".6">
        {Array.from({ length: 54 }, (_, i) => <circle key={i} cx={1015 + (i % 9) * 40} cy={470 + Math.floor(i / 9) * 25} r="2" />)}
        {Array.from({ length: 24 }, (_, i) => <circle key={i} cx={650 + (i % 6) * 30} cy={1540 + Math.floor(i / 6) * 32} r="2" />)}
      </g>
      <g stroke="#fff" strokeWidth="2" opacity=".3"><path d="M100 24V1674M931 24V1674M18 100H1668M18 942H1668" /></g>

      <g stroke="#c9a88e" strokeWidth="3" fill="#f8e0c9">
        <rect x="-10" y="661" width="89" height="53" rx="6" />
        <rect x="1066" y="889" width="70" height="57" rx="6" />
        <rect x="1475" y="683" width="84" height="53" rx="6" fill="#f5cdbd" />
      </g>
      <g fontSize="28" fontWeight="500" fill="#6b4d38" stroke="#6b4d38" strokeWidth=".6" textAnchor="middle">
        <text x="37" y="698">902</text><text x="1100" y="928">79</text><text x="1517" y="720">S86</text>
      </g>

      {labels.map((l) => (
        <text
          key={l.t + l.x}
          x={l.x}
          y={l.y}
          fontSize={l.s}
          textLength={l.w}
          lengthAdjust="spacingAndGlyphs"
          fill={l.c}
          fontWeight={l.b ? 700 : 400}
          fontStyle={l.i ? "italic" : "normal"}
          stroke="#fff"
          strokeOpacity={l.r ? 0.1 : 0.6}
          strokeWidth="7"
          strokeLinejoin="round"
          paintOrder="stroke"
          transform={l.r ? `rotate(${l.r} ${l.x} ${l.y})` : undefined}
        >
          {l.t}
        </text>
      ))}
    </svg>
  );
}

function Logo() {
  return (
    <svg className="mt-[13px] h-[44px] w-[55px] shrink-0 bg-[#fdfdfd]" viewBox="0 0 165 132">
      <defs><filter id="spray"><feGaussianBlur stdDeviation="1.5" /></filter></defs>
      <g filter="url(#spray)" fill="none" stroke="#1f1f1f" strokeLinecap="round">
        <path d="M47 24Q65 40 88 46Q108 51 121 60" strokeWidth="13" />
        <path d="M42 70Q70 57 88 45Q106 28 122 22" strokeWidth="12" />
        <path d="M74 50L98 46" strokeWidth="18" />
        <path d="M39 75L60 63" strokeWidth="14" />
        <path d="M122 20L133 17" stroke="#888" strokeWidth="6" />
        <path d="M41 77L36 120" strokeWidth="4.5" />
        <path d="M58 66L55 93M99 55L95 87" stroke="#333" strokeWidth="4.5" />
      </g>
    </svg>
  );
}

function Captcha() {
  let seed = 91;
  const rnd = () => (seed = (seed * 16807) % 2147483647) / 2147483647;
  return (
    <svg className="h-[39px] w-[88px] shrink-0 bg-white" viewBox="0 0 264 117">
      {Array.from({ length: 330 }, (_, i) => (
        <rect key={i} x={rnd() * 262} y={rnd() * 115} width="3.5" height="3.5" fill="#23352a" opacity={0.25 + rnd() * 0.45} />
      ))}
      <g fill="none" stroke="#24382a" opacity=".65" strokeWidth="3">
        <path d="M0 22L130 47L264 100M0 62L264 59M0 66L150 62M110 50L264 25M150 65L264 98M230 50L264 12" />
      </g>
      <defs><filter id="ink"><feGaussianBlur stdDeviation="1.6" /></filter></defs>
      <g filter="url(#ink)" fill="#1c3022" stroke="#1c3022" strokeWidth="1.5" fontWeight="400" fontFamily='"DejaVu Sans", sans-serif' fontSize="64">
        <text transform="translate(9 66) rotate(-2)" textLength="43" lengthAdjust="spacingAndGlyphs">A</text>
        <text transform="translate(68 62) rotate(12)" textLength="57" lengthAdjust="spacingAndGlyphs">M</text>
        <text transform="translate(146 62) rotate(8)" textLength="42" lengthAdjust="spacingAndGlyphs">Y</text>
        <text transform="translate(198 66)" textLength="56" lengthAdjust="spacingAndGlyphs">O</text>
      </g>
    </svg>
  );
}

const box = "rounded-[2px] border border-[#767676] bg-white outline-none";

export default function App() {
  return (
    <div className="flex h-[972px] w-full flex-col overflow-hidden bg-[#c8c9d9] font-['Liberation_Sans',Arial,sans-serif] text-[17.6px] leading-[26.4px] text-[#212529]">
      <nav className="flex h-[72px] shrink-0 items-start bg-[#343a40] pr-[26.5px] pl-[13px] text-white">
        <Logo />
        <a className="mt-[23px] ml-[17.5px] text-[22px] whitespace-nowrap">Street Art Mapper</a>
        <a className="mt-[22px] ml-[26px] whitespace-nowrap">Lista Street Art</a>
        <a className="mt-[22px] ml-[17.6px] whitespace-nowrap">Dodaj Street Art</a>
        <form className="mt-[13px] ml-auto flex gap-[9px]">
          <input placeholder="Search" className="h-[42px] w-[254px] rounded-[4px] border border-[#ced4da] bg-white px-[12.5px] text-[17.6px] text-[#495057] placeholder:text-[#6c757d]" />
          <button type="button" className="h-[42px] w-[84px] rounded-[4px] border border-[#17a2b8] text-[#17a2b8]">Search</button>
        </form>
        <span className="mt-[22px] ml-[9px] whitespace-nowrap text-[#999c9f]">Użytkownik: kinga</span>
        <a className="mt-[22px] ml-[17.6px] whitespace-nowrap">Wyloguj</a>
      </nav>

      <section className="mx-[17px] mt-[30px] mr-[18px] h-[85px] shrink-0 rounded-[4px] border border-[#bee5eb] bg-[#d1ecf1] px-[22px] pt-[15px] text-[#0c5460]">
        <p className="h-[29px]"><b className="mr-[0.6px] text-[19.8px] text-[#7b68ee]">Nowy</b> StreetArt</p>
        <p className="text-[14.3px] font-bold text-[#7b68ee]">Nie zapomnij o przypięciu pinezki na mapie!</p>
      </section>

      <main className="flex h-[730px] shrink-0 pl-[18px] font-bold">
        <form className="flex w-[593px] flex-col items-start pt-[79px]">
          <label className="flex h-[33px] items-center gap-[5px]">Tytuł:<input className={`h-[33px] w-[234px] ${box}`} /></label>
          <label className="mt-[23px] flex h-[33px] items-center gap-[5px]">Artysta:<input className={`h-[33px] w-[235px] ${box}`} /></label>
          <label className="mt-[23px] flex h-[33px] items-center gap-[5px]">Year:<input className={`h-[33px] w-[88px] ${box}`} /></label>
          <label className="mt-[23px] flex h-[270px] items-end gap-[5px]"><span className="-mb-[7px]">Opis:</span><textarea className={`h-[270px] w-[430px] ${box}`} /></label>
          <label className="mt-[35px] flex h-[24px] items-center gap-[5px]">
            Kategoria:
            <span className={`flex h-[24px] w-[97px] items-center justify-between pr-[4px] pl-[5px] text-[14.7px] font-normal text-black ${box}`}>
              ---------
              <svg className="h-[7px] w-[10px]" viewBox="0 0 10 7"><path d="M1 1.2L5 5.2L9 1.2" fill="none" stroke="#000" strokeWidth="2" /></svg>
            </span>
          </label>
          <div className="mt-[28px] flex h-[39px] items-start gap-[5px]">
            <Captcha />
            <input className={`mt-[2px] h-[33px] w-[234px] ${box}`} />
          </div>
          <button type="button" className="mt-[18px] h-[34px] w-[133px] rounded-[3.5px] bg-[#6c757d] pr-[1px] text-[15.4px] font-normal whitespace-nowrap text-white">Utwórz StreetArt</button>
        </form>

        <div className="relative mt-[151px] size-[550px] overflow-hidden">
          <CityMap />
          <div className="absolute top-[11px] left-[11px] flex flex-col rounded-[5px] border-2 border-black/20 bg-clip-padding">
            <button type="button" className="flex h-[33px] w-[33px] items-center justify-center rounded-t-[3px] border-b border-[#ccc] bg-white">
              <svg className="size-[14px]" viewBox="0 0 14 14"><path d="M6.5 .5V13.5M0 7H13" stroke="#000" strokeWidth="2.8" /></svg>
            </button>
            <button type="button" className="flex h-[33px] w-[33px] items-center justify-center rounded-b-[3px] bg-white">
              <svg className="size-[14px]" viewBox="0 0 14 14"><path d="M0 6.5H13" stroke="#000" strokeWidth="3" /></svg>
            </button>
          </div>
          <div className="absolute right-0 bottom-0 flex h-[19px] w-[193px] items-center bg-white/80 pb-[2px] pl-[6px] text-[13.2px] leading-[17px] whitespace-pre text-[#333]">
            <svg className="mt-[1px] mr-[3.5px] h-[9px] w-[13px]" viewBox="0 0 13 9"><path fill="#4c7be1" d="M0 0h13v4.5H0z" /><path fill="#ffd500" d="M0 4.5h13V9H0z" /></svg>
            <span className="text-[#0078a8]">Leaflet</span> | © <span className="text-[#0078a8]">OpenStreetMap</span>
          </div>
        </div>
      </main>

      <footer className="ml-[17px] h-[55px] shrink-0 bg-[#f5f5f5] pt-[14px] pl-[305px] text-[#6c757d]">©Kinga Szędzielarz, Logo created by kues1</footer>
    </div>
  );
}
